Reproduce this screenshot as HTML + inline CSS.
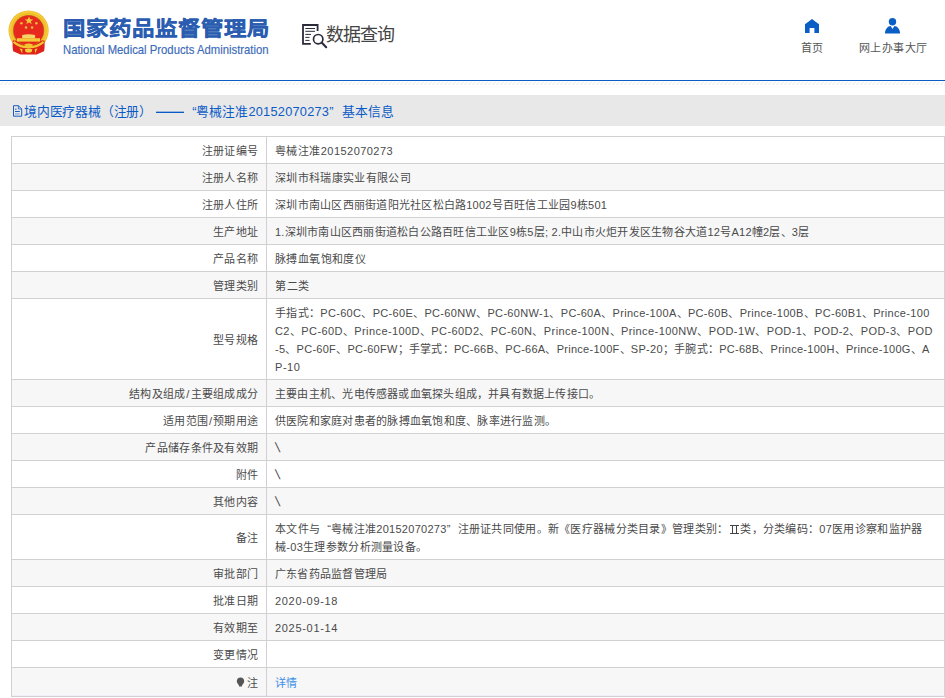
<!DOCTYPE html>
<html lang="zh-CN"><head><meta charset="utf-8">
<style>
*{margin:0;padding:0;box-sizing:border-box}
html,body{width:945px;height:698px;overflow:hidden;background:#fff;font-family:"Liberation Sans",sans-serif;color:#333}
.abs{position:absolute;white-space:nowrap}
.hdr{position:absolute;left:0;top:0;width:945px;height:81px;border-bottom:1px solid #0a5cc4}
.hatch{position:absolute;left:0;top:81px;width:945px;height:5px}
.t1{left:63px;top:15px;font-size:22.4px;font-weight:bold;color:#2a5db0;line-height:30px;letter-spacing:1px;-webkit-text-stroke:0.35px #2a5db0;transform-origin:0 13px;transform:scaleY(0.92)}
.t2{left:63px;top:42px;font-size:13px;color:#3565b5;line-height:16px;transform-origin:0 0;transform:scaleX(0.87);-webkit-text-stroke:0.15px #3a6ab8;color:#3a6ab8}
.sqt{left:326px;top:23px;font-size:18px;color:#444;line-height:24px;letter-spacing:-1px}
.nav{top:41px;font-size:11px;color:#555;line-height:14px;letter-spacing:0.4px}
.band{position:absolute;left:0;top:95px;width:945px;height:31px;background:#e8e8e8}
.bt{top:103px;font-size:12.8px;color:#0b5bc6;line-height:18px}
table{position:absolute;left:11px;top:136px;width:934px;border-collapse:collapse;table-layout:fixed;font-size:11px;color:#4a4a4a}
td{border:1px solid #d3d0d3;height:27px;line-height:18px;vertical-align:middle;padding-top:1px;white-space:nowrap;overflow:visible}
td.l{text-align:right;padding-right:7.7px;letter-spacing:0.3px}
td.v{padding-left:8px;padding-right:0}
tr:nth-child(even) td{background:#f7f7f7}
tr.last td{height:29px;box-shadow:inset 0 -1px 0 #eef0f5}
.d{letter-spacing:0.3px}
.r2{display:inline-block;width:9px;height:9px;margin:0 1.5px 0 1.5px;border-top:1px solid #444;border-bottom:1px solid #444;background:linear-gradient(90deg,transparent 2px,#444 2px,#444 3.2px,transparent 3.2px,transparent 5.8px,#444 5.8px,#444 7px,transparent 7px);vertical-align:-1px}
.bs{font-size:13.5px;display:inline-block;margin-left:1px;transform:skewX(12deg);line-height:18px}
.ql{display:inline-block;width:1em;text-align:right}
.qr{display:inline-block;width:1em;text-align:left}
</style></head><body>
<div class="hdr"></div>
<svg class="hatch" width="945" height="5" viewBox="0 0 945 5">
  <defs><pattern id="hp" width="4" height="5" patternUnits="userSpaceOnUse">
    <path d="M0.5 4 L3.5 1" stroke="#e4e4e4" stroke-width="1"/>
  </pattern></defs>
  <rect width="945" height="5" fill="url(#hp)"/>
</svg>
<svg style="position:absolute;left:0;top:0" width="60" height="60" viewBox="0 0 60 60">
  <defs><clipPath id="ct"><rect x="0" y="0" width="60" height="43"/></clipPath></defs>
  <g clip-path="url(#ct)"><circle cx="28.6" cy="30.5" r="20.1" fill="#f0bf2c"/>
  <circle cx="28.6" cy="30.5" r="18.6" fill="none" stroke="#f7d34a" stroke-width="1"/></g>
  <path d="M12.7 40.5 C12.4 45 12.6 49 13.2 51.2 L20.5 54.4 L36.7 54.4 L44 51.2 C44.6 49 44.8 45 44.5 40.5 Z" fill="#e0231a"/>
  <circle cx="28.6" cy="30.5" r="15.6" fill="#b8861c"/>
  <circle cx="28.6" cy="30.5" r="15.1" fill="#e8291e"/>
  <path d="M13.6 41.8 Q20 47.5 28.6 47.2 Q37 47.5 43.6 41.8" fill="none" stroke="#f2c530" stroke-width="2.3"/>
  <path d="M29 16.5 L30.2 19.3 L33.2 19.4 L30.8 21.2 L31.7 24.1 L29 22.4 L26.3 24.1 L27.2 21.2 L24.8 19.4 L27.8 19.3 Z" fill="#f3c93a"/>
  <circle cx="21.4" cy="23.2" r="1.25" fill="#e6c23a"/>
  <circle cx="36.4" cy="23.2" r="1.25" fill="#e6c23a"/>
  <circle cx="26" cy="27.6" r="1.25" fill="#e6c23a"/>
  <circle cx="32.1" cy="27.6" r="1.25" fill="#e6c23a"/>
  <path d="M22.2 35 Q28.6 33.6 35.1 35 L35.1 38.2 H22.2 Z" fill="#f5d565"/>
  <path d="M16.9 38.2 H40 V41.6 H16.9 Z" fill="#f4cc3a"/>
  <path d="M24.3 44.5 Q28.6 42.3 32.9 44.5 L31.5 47.3 Q28.6 48.6 25.7 47.3 Z" fill="#f2c530"/>
  <path d="M19.6 48.6 L22.4 49 L22.2 53.6 Z M37.6 48.6 L34.8 49 L35 53.6 Z" fill="#f2c530"/>
  <path d="M24.8 49.2 Q28.6 47.6 32.4 49.2 L31.6 52 Q28.6 53 25.6 52 Z" fill="#f4cf40"/>
</svg>
<div class="abs t1">国家药品监督管理局</div>
<div class="abs t2">National Medical Products Administration</div>
<svg style="position:absolute;left:290px;top:15px" width="45" height="40" viewBox="290 15 45 40">
  <path d="M310.8 43.9 H303 V25 H317.6 V31" fill="none" stroke="#2b2b3b" stroke-width="1.8"/>
  <path d="M305.3 28.5 H315 M305.3 31.3 H315 M305.3 34.4 H311 M305.3 37.4 H309.5 M305.3 40.4 H309.5" stroke="#2b2b3b" stroke-width="1"/>
  <circle cx="318.2" cy="39.2" r="4.7" fill="none" stroke="#2b2b3b" stroke-width="1.7"/>
  <path d="M321.6 42.6 L326.2 47.2" stroke="#2b2b3b" stroke-width="2.1" stroke-linecap="round"/>
</svg>
<div class="abs sqt">数据查询</div>
<svg style="position:absolute;left:780px;top:10px" width="140" height="30" viewBox="780 10 140 30">
  <path d="M805 24.3 L812 19 L819 24.3 V33 H814.4 V28 H809.6 V33 H805 Z" fill="#0a5ec4"/>
  <circle cx="892.5" cy="21.7" r="3.7" fill="#0a5ec4"/>
  <path d="M885 33.6 C885 29 887.8 25.9 890.7 25.9 L892.5 29.1 L894.4 25.9 C897.3 25.9 900.1 29 900.1 33.6 Z" fill="#0a5ec4"/>
</svg>
<div class="abs nav" style="left:801px">首页</div>
<div class="abs nav" style="left:859px">网上办事大厅</div>
<div class="band"></div>
<svg style="position:absolute;left:10px;top:102px" width="16" height="18" viewBox="10 102 16 18">
  <path d="M13.5 105.7 H18.4 L21.7 109 V116.2 H13.5 Z" fill="none" stroke="#1a5cc0" stroke-width="1"/>
  <path d="M18.4 105.7 V109 H21.7" fill="none" stroke="#1a5cc0" stroke-width="0.8"/>
  <path d="M15 109.2 H16.6 M15 111.5 H19.8" stroke="#1a5cc0" stroke-width="1"/>
  <path d="M15 113.9 H19.8" stroke="#8aa6d8" stroke-width="1.2"/>
</svg>
<div class="abs bt" style="left:24px;letter-spacing:-0.2px">境内医疗器械（注册）</div><div style="position:absolute;left:156px;top:111px;width:28px;height:2px;border-top:1px solid rgba(11,91,198,0.35);border-bottom:1px solid #0b5bc6"></div><div class="abs bt" id="bt3" style="left:183.6px"><span class="ql">“</span>粤械注准<span class="d" style="letter-spacing:0.23px">20152070273</span><span class="qr">”</span>基本信息</div>
<table><colgroup><col style="width:255px"><col></colgroup>
<tr><td class="l">注册证编号</td><td class="v" id="v1" style="letter-spacing:0.45px">粤械注准20152070273</td></tr>
<tr><td class="l">注册人名称</td><td class="v" id="v2" style="letter-spacing:0.32px">深圳市科瑞康实业有限公司</td></tr>
<tr><td class="l">注册人住所</td><td class="v" id="v3" style="letter-spacing:0.25px">深圳市南山区西丽街道阳光社区松白路1002号百旺信工业园9栋501</td></tr>
<tr><td class="l">生产地址</td><td class="v" id="v4" style="letter-spacing:0.25px">1.深圳市南山区西丽街道松白公路百旺信工业区9栋5层; 2.中山市火炬开发区生物谷大道12号A12幢2层、3层</td></tr>
<tr><td class="l">产品名称</td><td class="v" id="v5" style="letter-spacing:0.4px">脉搏血氧饱和度仪</td></tr>
<tr><td class="l">管理类别</td><td class="v" id="v6" style="letter-spacing:0.5px">第二类</td></tr>
<tr><td class="l" style="height:81px">型号规格</td><td class="v" id="v7"><div id="m1" style="letter-spacing:0.32px">手指式：PC-60C、PC-60E、PC-60NW、PC-60NW-1、PC-60A、Prince-100A、PC-60B、Prince-100B、PC-60B1、Prince-100</div><div id="m2" style="letter-spacing:0.41px">C2、PC-60D、Prince-100D、PC-60D2、PC-60N、Prince-100N、Prince-100NW、POD-1W、POD-1、POD-2、POD-3、POD</div><div id="m3" style="letter-spacing:0.27px">-5、PC-60F、PC-60FW；手掌式：PC-66B、PC-66A、Prince-100F、SP-20；手腕式：PC-68B、Prince-100H、Prince-100G、A</div><div id="m4" style="letter-spacing:0.54px">P-10</div></td></tr>
<tr><td class="l">结构及组成<span style="padding:0 0.8px">/</span>主要组成成分</td><td class="v" id="v8" style="letter-spacing:0.22px">主要由主机、光电传感器或血氧探头组成，并具有数据上传接口。</td></tr>
<tr><td class="l">适用范围<span style="padding:0 0.8px">/</span>预期用途</td><td class="v" id="v9" style="letter-spacing:0.24px">供医院和家庭对患者的脉搏血氧饱和度、脉率进行监测。</td></tr>
<tr><td class="l">产品储存条件及有效期</td><td class="v" id="v10"><span class="bs">\</span></td></tr>
<tr><td class="l">附件</td><td class="v" id="v11"><span class="bs">\</span></td></tr>
<tr><td class="l">其他内容</td><td class="v" id="v12"><span class="bs">\</span></td></tr>
<tr><td class="l" style="height:45px">备注</td><td class="v" id="v13"><div id="r1" style="letter-spacing:0.28px">本文件与<span class="ql">“</span>粤械注准20152070273<span class="qr">”</span>注册证共同使用。新《医疗器械分类目录》管理类别：<span class="r2"></span>类，分类编码：07医用诊察和监护器</div><div id="r2" style="letter-spacing:0.29px">械-03生理参数分析测量设备。</div></td></tr>
<tr><td class="l">审批部门</td><td class="v" id="v14" style="letter-spacing:0.22px">广东省药品监督管理局</td></tr>
<tr><td class="l">批准日期</td><td class="v" id="v15" style="letter-spacing:0.69px">2020-09-18</td></tr>
<tr><td class="l">有效期至</td><td class="v" id="v16" style="letter-spacing:0.69px">2025-01-14</td></tr>
<tr><td class="l">变更情况</td><td class="v" id="v17"></td></tr>
<tr class="last"><td class="l"><svg width="9" height="11" viewBox="0 0 9 11" style="vertical-align:-1px;margin-right:2px"><path d="M4.5 0.6 C2.2 0.6 0.8 2.3 0.8 4.2 C0.8 6 2.3 7.3 3 8.4 V9.6 H6 V8.4 C6.7 7.3 8.2 6 8.2 4.2 C8.2 2.3 6.8 0.6 4.5 0.6 Z" fill="#555"/></svg>注</td><td class="v" id="v18" style="color:#3d8ee8;letter-spacing:0.49px">详情</td></tr>
</table>
</body></html>
